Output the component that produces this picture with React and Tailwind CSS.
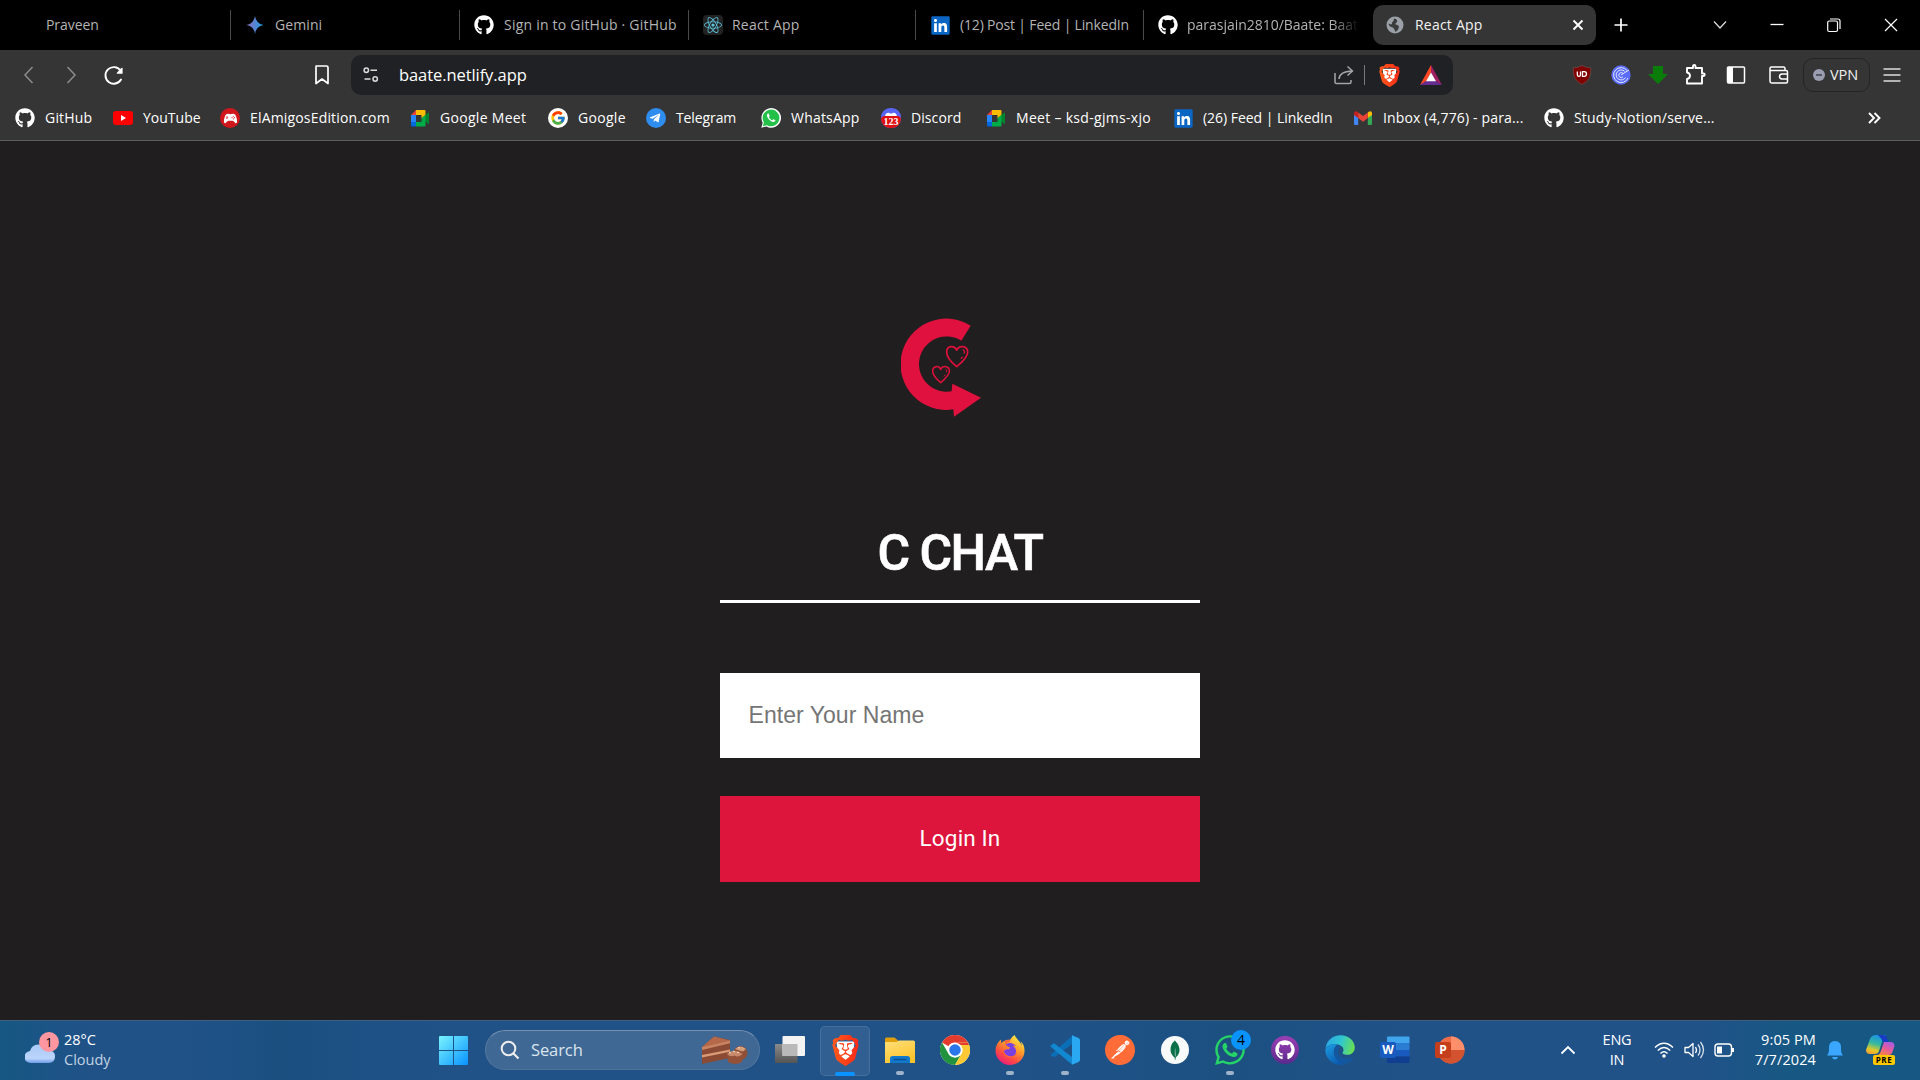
import React from "react";
import { FaGithub, FaWhatsapp, FaTelegramPlane, FaLinkedin, FaReact } from "react-icons/fa";
import { FcGoogle } from "react-icons/fc";
import { SiBrave, SiPostman, SiMongodb, SiFirefoxbrowser } from "react-icons/si";
import { IoLogoGameControllerB } from "react-icons/io";

const UI = "font-['Open_Sans','Noto_Sans',sans-serif]";

function Svg({ w = 20, h = 20, box, children, className = "" }) {
  return (
    <svg width={w} height={h} viewBox={box || `0 0 ${w} ${h}`} fill="none" className={"block shrink-0 " + className}>
      {children}
    </svg>
  );
}

function Gradients() {
  return (
    <svg width="0" height="0" className="absolute">
      <defs>
        <linearGradient id="fox" x1="0.8" y1="0" x2="0.2" y2="1">
          <stop offset="0" stopColor="#fff44f" />
          <stop offset="0.35" stopColor="#ffa52a" />
          <stop offset="0.7" stopColor="#ff4a41" />
          <stop offset="1" stopColor="#e31587" />
        </linearGradient>
        <linearGradient id="brave" x1="0" y1="0" x2="1" y2="0">
          <stop offset="0" stopColor="#ff5a1c" />
          <stop offset="1" stopColor="#fb2a17" />
        </linearGradient>
        <linearGradient id="gem" x1="0" y1="0" x2="1" y2="0">
          <stop offset="0" stopColor="#8a6fc0" />
          <stop offset="0.5" stopColor="#5684d1" />
          <stop offset="1" stopColor="#1ba1e3" />
        </linearGradient>
        <linearGradient id="win" x1="0" y1="0" x2="1" y2="1">
          <stop offset="0" stopColor="#7af3ff" />
          <stop offset="1" stopColor="#0893ff" />
        </linearGradient>
        <linearGradient id="edgeTop" x1="0" y1="0.4" x2="1" y2="0.6">
          <stop offset="0" stopColor="#2aa7e4" />
          <stop offset="0.5" stopColor="#30c6cf" />
          <stop offset="1" stopColor="#6be04f" />
        </linearGradient>
        <linearGradient id="edgeLow" x1="0" y1="0" x2="0.6" y2="1">
          <stop offset="0" stopColor="#1c9de2" />
          <stop offset="1" stopColor="#0c5ab0" />
        </linearGradient>
        <linearGradient id="folder" x1="0" y1="0" x2="0.5" y2="1">
          <stop offset="0" stopColor="#ffe07d" />
          <stop offset="1" stopColor="#fcc42c" />
        </linearGradient>
        <linearGradient id="cloud" x1="0" y1="0" x2="0" y2="1">
          <stop offset="0" stopColor="#a9c9f7" />
          <stop offset="0.75" stopColor="#bcd5fb" />
          <stop offset="1" stopColor="#6f9be8" />
        </linearGradient>
        <linearGradient id="copA" x1="0.6" y1="0" x2="0.3" y2="1">
          <stop offset="0" stopColor="#1a8fe6" />
          <stop offset="0.45" stopColor="#33b8a0" />
          <stop offset="0.8" stopColor="#e5c928" />
          <stop offset="1" stopColor="#f0a030" />
        </linearGradient>
        <linearGradient id="copB" x1="0.8" y1="0" x2="0.2" y2="1">
          <stop offset="0" stopColor="#a55be8" />
          <stop offset="0.5" stopColor="#e55c9a" />
          <stop offset="1" stopColor="#f9863d" />
        </linearGradient>
        <linearGradient id="purp" x1="0" y1="0" x2="0" y2="1">
          <stop offset="0" stopColor="#9b3fb5" />
          <stop offset="1" stopColor="#5b2a8c" />
        </linearGradient>
        <linearGradient id="tv" x1="0" y1="0" x2="0" y2="1">
          <stop offset="0" stopColor="#8a8a8a" />
          <stop offset="1" stopColor="#555555" />
        </linearGradient>
      </defs>
    </svg>
  );
}

/* ---------- brand icons ---------- */

function MeetIcon() {
  return (
    <Svg w={20} h={20}>
      <path d="M1 7L6 2v5z" fill="#ea4335" />
      <path d="M6 2h8.500Q15.500 2 15.500 3v5l-4 2.500V7H6z" fill="#fbbc04" />
      <path d="M1 7h5v7H1z" fill="#2684fc" />
      <path d="M1 14h5v4.500H2.200Q1 18.500 1 17.300z" fill="#0066da" />
      <path d="M6 14h5.500v-3.500l4 2.500v4.500q0 1-1 1H6z" fill="#00ac47" />
      <path d="M11.500 10.300L18 4.800q1-.6 1 .5v10q0 1.100-1 .4z" fill="#00832d" />
      <path d="M11.500 10.300L15.500 7v7z" fill="#00ac47" />
    </Svg>
  );
}

function GmailIcon() {
  return (
    <Svg w={20} h={20}>
      <path d="M1 5.500h4.200V17H2.300Q1 17 1 15.700z" fill="#4285f4" />
      <path d="M14.800 5.500H19v10.200Q19 17 17.700 17h-2.900z" fill="#34a853" />
      <path d="M1 5q0-1.800 1.800-1.800 1 0 1.800.7l.6.500v5.700L1 7z" fill="#c5221f" />
      <path d="M19 5q0-1.800-1.800-1.800-1 0-1.800.7l-.6.500v5.700L19 7z" fill="#fbbc04" />
      <path d="M5.200 4.400L10 8l4.800-3.600v5.700L10 13.700l-4.800-3.600z" fill="#ea4335" />
    </Svg>
  );
}

function LinkedInIcon() {
  return (
    <span className="flex w-[18px] shrink-0 justify-center">
      <span className="flex size-[16px] items-center justify-center bg-white">
        <FaLinkedin size={21} className="shrink-0 text-[#0a66c2]" />
      </span>
    </span>
  );
}

function GithubIcon() {
  return <FaGithub size={20} className="shrink-0 text-white" />;
}

function ReactIcon() {
  return (
    <span className="flex size-5 shrink-0 items-center justify-center rounded-sm bg-[#222222]">
      <FaReact size={18} className="text-[#5fc6e0]" />
    </span>
  );
}

function BraveIcon({ w, h }) {
  return (
    <svg width={w} height={h} viewBox="1.500 0 21 24" preserveAspectRatio="none" className="block shrink-0">
      <path d="M5 5h14l-1 9-6 6-6-6z" fill="#fff" />
      <SiBrave size={24} fill="url(#brave)" stroke="none" />
    </svg>
  );
}

function WhatsAppBadge() {
  return (
    <Svg w={20} h={20}>
      <path d="M.3 19.800L1.700 14.700A9.800 9.800 0 1 1 5.400 18.400z" fill="#fff" />
      <path d="M1.800 18.300l1.100-3.900A8.400 8.400 0 1 1 5.800 17.200z" fill="#25c04a" />
      <path d="M7 5.500c-.8.500-1.300 1.500-.9 2.700.9 2.700 3 4.800 5.700 5.700 1.200.3 2.100-.2 2.500-1.100l-.1-.7-2-.9-1 1c-1.500-.6-2.700-1.800-3.300-3.200l.8-1-.9-2.200z" fill="#fff" />
    </Svg>
  );
}

function DiscordIcon() {
  return (
    <div className="flex size-5 shrink-0 flex-col items-center overflow-hidden rounded-[9px] bg-[#5865f2]">
      <Svg w={20} h={8}>
        <path d="M4 9c0-3 2-4.500 4-4.200l.8.700h2.400l.8-.7c2-.3 4 1.200 4 4.200z" fill="#fff" />
      </Svg>
      <div className="flex h-3 w-5 items-center justify-center rounded-[4px] bg-[#e01010] font-['Liberation_Serif',serif] text-[10px] font-bold leading-none text-white">123</div>
    </div>
  );
}

function ChromeIcon() {
  return (
    <Svg w={30} h={30} box="0 0 48 48">
      <circle cx="24" cy="24" r="24" fill="#fff" />
      <path d="M3.200 12A24 24 0 0 1 44.800 12H24a12 12 0 0 0-10.400 6z" fill="#e33b2e" />
      <path d="M3.200 12A24 24 0 0 0 24 48l10.400-18A12 12 0 0 1 13.600 30z" fill="#23923f" />
      <path d="M44.800 12A24 24 0 0 1 24 48l10.400-18A12 12 0 0 0 34.400 18L31 12z" fill="#fcc934" />
      <path d="M24 12h20.800L46 16H33z" fill="#e33b2e" />
      <circle cx="24" cy="24" r="11.800" fill="#fff" />
      <circle cx="24" cy="24" r="9.200" fill="#2b76ea" />
    </Svg>
  );
}

function FirefoxIcon() {
  return (
    <svg width="30" height="30" viewBox="0 0 24 24" className="block">
      <circle cx="12" cy="13" r="9.500" fill="#ff6a3c" />
      <circle cx="12.500" cy="11.500" r="5.600" fill="#7a3fe0" />
      <SiFirefoxbrowser size={24} fill="url(#fox)" stroke="none" />
    </svg>
  );
}

function CodeIcon() {
  return (
    <Svg w={30} h={30}>
      <path d="M1 19.500L22 1v8L4.500 22 1 20.700z" fill="#0b6fb8" />
      <path d="M.7 10.500L4 8.300 22 22v7.500L.7 11.700z" fill="#1288d1" />
      <path d="M22 .3L28.500 3q1.500.8 1.500 2.300v19.400q0 1.500-1.500 2.300L22 29.700z" fill="#2aa9f2" />
    </Svg>
  );
}

function EdgeIcon() {
  return (
    <Svg w={30} h={30}>
      <path d="M.5 13.500C1.500 5.500 7.500.2 15.500.2 24 .2 29.800 6 29.800 12.500c0 4.500-3.300 7.300-7.400 7.300-3.600 0-5.400-1.300-4.600-2.600 1.400-2 .8-4.800-1.600-6.300C10.800 7.500 3.500 8.500.5 13.500z" fill="url(#edgeTop)" />
      <path d="M.4 14.300C2.500 9.500 8.500 8 12.800 9.600c-3.600 2-5 6.500-3.400 10.700 1.700 4.400 6 7.600 10.300 9-9.900 2.500-20-4.500-19.300-15z" fill="url(#edgeLow)" />
      <path d="M12.800 10.500c-3.800 2.500-4.600 7-2.800 11.300 2 4.500 7 8 11.400 6.700 3-1 5.300-3 6.600-5.300.3-.6 0-1-.6-.7-6.400 3-14.300.3-14.600-5.700-.1-2 1-3.800 2.700-4.500z" fill="#1357a0" />
    </Svg>
  );
}

function OfficeIcon({ letter, kind }) {
  return (
    <div className="relative h-[30px] w-[30px]">
      {kind === "word" ? (
        <Svg w={30} h={30}>
          <path d="M8 1.500h20.500q1 0 1 1V8H7V2.500q0-1 1-1z" fill="#41a5ee" />
          <path d="M7 8h22.500v7H7z" fill="#2b7cd3" />
          <path d="M7 15h22.500v6.500H7z" fill="#185abd" />
          <path d="M7 21.500h22.500V27q0 1-1 1H8q-1 0-1-1z" fill="#103f91" />
        </Svg>
      ) : (
        <Svg w={30} h={30}>
          <circle cx="16" cy="15" r="13.500" fill="#ed6c47" />
          <path d="M16 1.500A13.500 13.500 0 0 1 29.500 15H16z" fill="#ff8f6b" />
          <path d="M2.500 15h27a13.500 13.500 0 0 1-27 0z" fill="#d35230" />
        </Svg>
      )}
      <div className={"absolute left-0 top-[7px] flex size-[16px] items-center justify-center rounded-[2px] font-['Open_Sans',sans-serif] text-[12px] font-bold leading-none text-white " + (kind === "word" ? "bg-[#185abd]" : "bg-[#c43e1c]")}>{letter}</div>
    </div>
  );
}

function FolderIcon() {
  return (
    <Svg w={30} h={30}>
      <path d="M0 4q0-1.500 1.500-1.500h8L13 5.500V12H0z" fill="#e0a00d" />
      <path d="M0 7h11.500l2.500-1.500h14.500Q30 5.500 30 7v21H0z" fill="url(#folder)" />
      <path d="M5 28v-4.500Q5 21 7.500 21h15q2.500 0 2.500 2.500V28z" fill="#1079cc" />
      <path d="M8.500 24.500h13" stroke="#0a4d90" strokeWidth="1.500" />
    </Svg>
  );
}

function CakeIcon() {
  return (
    <Svg w={48} h={30}>
      <path d="M1 12L13 1.500 29 5v18L1 29z" fill="#8a4a34" />
      <path d="M1 12L13 1.500 29 5.500z" fill="#b5694a" />
      <path d="M1 12l28-6.500v2.700L1 15z" fill="#c98362" />
      <path d="M1 20l28-5.500v2.300L1 22.500z" fill="#d99a78" />
      <circle cx="39.500" cy="18" r="7" fill="#8e4f39" />
      <path d="M34 14q5-5 11 0l-3 2.500-4-1z" fill="#d39a78" />
      <path d="M26 19q7-5 16 0l-1 8q-6.500 4-14 0z" fill="#94513a" />
      <path d="M26 19q7-6.500 15.500 0-4 4-8 1.500-4 2-7.500-1.500z" fill="#c98a6b" />
      <path d="M28 17.500l2 .5m2-2l2 1m2 .5l2 0m-1-5l2 .5m2-.5l1 1" stroke="#f3d9c4" />
    </Svg>
  );
}

/* ---------- browser chrome ---------- */

function Tab({ width, icon, title, tracking }) {
  return (
    <div className={"flex h-[30px] shrink-0 items-center border-r border-[#4a4a4a] " + width}>
      {icon}
      <span className={"whitespace-nowrap pb-[2px] text-[14px] text-[#b3b3b3] " + tracking}>{title}</span>
    </div>
  );
}

function TabStrip() {
  return (
    <div className="flex h-[50px] shrink-0 items-center bg-black">
      <Tab width="w-[231px] pl-[46px]" title="Praveen" tracking="tracking-[-0.05px]" />
      <Tab
        width="w-[229px] gap-[11px] pl-[15px]"
        icon={<Svg w={18} h={20}><path d="M9 1q1.200 7.800 8.500 9Q10.200 11.200 9 19 7.800 11.200.5 10 7.800 8.800 9 1z" fill="url(#gem)" /></Svg>}
        title="Gemini"
        tracking="tracking-[0.1px]"
      />
      <Tab width="w-[229px] gap-[10px] pl-[14px]" icon={<GithubIcon />} title="Sign in to GitHub · GitHub" tracking="tracking-[0.22px]" />
      <Tab width="w-[227px] gap-[9px] pl-[14px]" icon={<ReactIcon />} title="React App" tracking="tracking-[0.22px]" />
      <Tab width="w-[228px] gap-[11px] pl-[15px]" icon={<LinkedInIcon />} title="(12) Post | Feed | LinkedIn" tracking="tracking-[-0.17px]" />
      <div className="flex h-[30px] w-[229px] shrink-0 items-center gap-[9px] pl-[14px]">
        <GithubIcon />
        <span className="w-[176px] whitespace-nowrap pb-[2px] text-[14px] tracking-[-0.02px] text-[#b3b3b3] [mask-image:linear-gradient(to_right,black_145px,transparent_172px)]">parasjain2810/Baate: Baat</span>
      </div>
      <div className="flex h-10 w-[223px] shrink-0 items-center rounded-[10px] bg-[#353535] pl-[13px] pr-[10px]">
        <Svg w={18} h={18}>
          <circle cx="9" cy="9" r="8.500" fill="#9aa0a6" />
          <path d="M8 2.500Q12 3 11 6 9 7 9.500 8.500q3 0 3.500 2.500-.5 3-3.500 5-1-3-2.500-4.500Q3 11 2.500 7.500L5 8.500q1.500-.5 1-2Q8 5 8 2.500z" fill="#3a3b3d" />
        </Svg>
        <span className="ml-[11px] pb-[2px] text-[14px] tracking-[0.22px] text-[#f2f2f2]">React App</span>
        <Svg w={16} h={16} className="ml-auto"><path d="M3.500 3.500l9 9m0-9l-9 9" stroke="#fff" strokeWidth="1.900" /></Svg>
      </div>
      <div className="flex flex-1 items-center">
        <Svg w={16} h={16} className="ml-[17px]"><path d="M8 1.500v13M1.500 8h13" stroke="#fff" strokeWidth="1.700" /></Svg>
        <Svg w={16} h={16} className="ml-[83px]"><path d="M2 4.500l6 6.500 6-6.500" stroke="#ddd" strokeWidth="1.200" /></Svg>
        <Svg w={16} h={16} className="ml-[41px]"><path d="M1.500 7.500h13" stroke="#fff" strokeWidth="1.300" /></Svg>
        <Svg w={16} h={16} className="ml-[41px]">
          <rect x="1.700" y="4" width="9.800" height="10.500" rx="1.500" stroke="#fff" strokeWidth="1.200" />
          <path d="M4 2h8q2 0 2 2v8" stroke="#fff" strokeWidth="1.200" />
        </Svg>
        <Svg w={16} h={16} className="ml-[41px]"><path d="M2 2l12 12M14 2L2 14" stroke="#fff" strokeWidth="1.200" /></Svg>
      </div>
    </div>
  );
}

function NavBar() {
  return (
    <div className="flex h-[50px] shrink-0 items-center">
      <div className="flex w-[351px] items-center">
        <Svg w={20} h={20} className="ml-[19px]"><path d="M13.500 2L6 10l7.500 8" stroke="#8c8c8c" strokeWidth="1.500" /></Svg>
        <Svg w={20} h={20} className="ml-[22px]"><path d="M6.500 2L14 10l-7.500 8" stroke="#8c8c8c" strokeWidth="1.500" /></Svg>
        <Svg w={22} h={22} className="ml-[22px]">
          <path d="M17.500 6.500A8.300 8.300 0 1 0 18 15.500" stroke="#fff" strokeWidth="1.900" strokeLinecap="round" />
          <path d="M19.600 4v5.800h-5.800q-.4-1.200 1-2l3-3.200q1-1.200 1.800-.6z" fill="#fff" />
        </Svg>
        <Svg w={16} h={20} className="ml-[189px]"><path d="M2 1h10.500q1.500 0 1.500 1.500V18.500L8 14l-6 4.500V2.500Q2 1 3 1z" stroke="#fff" strokeWidth="1.700" strokeLinejoin="round" /></Svg>
      </div>
      <div className="flex h-10 w-[1102px] items-center rounded-[10px] bg-[#202124]">
        <Svg w={18} h={18} className="ml-[11px]">
          <circle cx="4.300" cy="4.300" r="2.200" stroke="#ddd" strokeWidth="1.500" />
          <path d="M8.500 4.300H15M2.500 13h6" stroke="#ddd" strokeWidth="1.500" />
          <circle cx="13.200" cy="13" r="2.200" stroke="#ddd" strokeWidth="1.500" />
        </Svg>
        <span className="ml-[19px] text-[16.5px] tracking-[-0.08px] text-white">baate.netlify.app</span>
        <Svg w={20} h={20} className="ml-auto">
          <path d="M1 8v9q0 1.500 1.500 1.500h13q1.500 0 1.500-1.500v-2" stroke="#a5a5a7" strokeWidth="1.500" />
          <path d="M5 14Q5.500 6.500 18 6M13.500 1.500L18.500 6l-5 4.500" stroke="#a5a5a7" strokeWidth="1.500" />
        </Svg>
        <div className="ml-[10px] h-5 w-px bg-[#77787a]" />
        <div className="ml-[14px]"><BraveIcon w={21} h={23} /></div>
        <Svg w={22} h={20} className="ml-[20px] mr-[11px]">
          <path d="M11 0L0 20l6.500-4L11 7.500z" fill="#ff4724" />
          <path d="M11 0l11 20-6.500-4L11 7.500z" fill="#9e1f63" />
          <path d="M0 20h22l-6.500-4h-9z" fill="#662d91" />
          <path d="M11 7.500l5 8.700H6z" fill="#fff" />
        </Svg>
      </div>
      <div className="flex flex-1 items-center">
        <div className="ml-[119px] flex w-[20px] justify-center">
          <Svg w={20} h={20}>
            <path d="M10 .5q4 2.500 8.700 2.300Q20 15 10 19.500 0 15 1.300 2.800 6 3 10 .5z" fill="#800000" stroke="#7a5555" strokeWidth=".6" />
            <path d="M5.300 6.500v3.200q0 1.600 1.600 1.600t1.600-1.600V6.500m2 .2h1.800q2.200.2 2.200 2.300t-2.200 2.300h-1.800z" stroke="#fff" strokeWidth="1.300" />
          </Svg>
        </div>
        <Svg w={20} h={20} className="ml-[19px]">
          <circle cx="10" cy="10" r="9.700" fill="#5a6cf5" />
          <path d="M16 5.500A7.500 7.500 0 1 0 17 13M13.700 6.400A5 5 0 1 0 14.500 12.500M12 8.300a2.500 2.500 0 1 0 0 3.600M10 10l8-5" stroke="#e4e8ff" strokeWidth="1" />
        </Svg>
        <Svg w={20} h={20} className="ml-[17px]"><path d="M5 1h10v8h5l-10 10L0 9h5z" fill="#0a7c0a" /></Svg>
        <Svg w={22} h={22} className="ml-[17px]"><path d="M2 4h6V2.200q0-1.200 1.200-1.200T10.500 2.200V4H17v5.500h1.500q1.200 0 1.200 1.200t-1.200 1.300H17V19.500H2V15q3-.5 3-3.200T2 8.500z" stroke="#fff" strokeWidth="1.900" strokeLinejoin="round" /></Svg>
        <Svg w={20} h={20} className="ml-[19px]"><rect x="1.500" y="2" width="17" height="16" rx="1" stroke="#fff" strokeWidth="1.500" /><path d="M1 2h6v16H1z" fill="#fff" /></Svg>
        <Svg w={22} h={20} className="ml-[22px]">
          <path d="M17 5V3.500Q17 2 15.500 2H3.500Q2 2 2 3.500v12.800Q2 18 3.700 18H18q1.500 0 1.500-1.500V7Q19.500 5.500 18 5.500H2.500" stroke="#fff" strokeWidth="1.500" />
          <path d="M19.500 9H14q-2.500.3-2.500 2.500T14 14h5.500" stroke="#fff" strokeWidth="1.500" />
        </Svg>
        <div className="ml-[13px] flex h-[34px] w-[67px] items-center rounded-[10px] border border-[#242424] pl-[9px]">
          <Svg w={12} h={12}><circle cx="6" cy="6" r="6" fill="#9a9cb0" /><path d="M3 6h6" stroke="#3a3a44" strokeWidth="1.400" /></Svg>
          <span className="ml-[5px] text-[14.5px] tracking-[-0.1px] text-[#efefef]">VPN</span>
        </div>
        <Svg w={18} h={16} className="ml-[13px]"><path d="M0.500 2h17M.5 8h17M.5 14h17" stroke="#ddd" strokeWidth="1.500" /></Svg>
      </div>
    </div>
  );
}

const bookmarks = [
  { w: "w-[98px]", icon: <GithubIcon />, t: "GitHub", s: "tracking-[0.2px]" },
  {
    w: "w-[107px]",
    icon: (
      <span className="flex size-5 shrink-0 items-center justify-center"><Svg w={20} h={14}><rect width="20" height="14" rx="3" fill="#f00" /><path d="M8 4l5 3-5 3z" fill="#fff" /></Svg></span>
    ),
    t: "YouTube",
    s: "tracking-[0px]",
  },
  {
    w: "w-[190px]",
    icon: (
      <span className="flex size-5 shrink-0 items-center justify-center rounded-full bg-[#d0181c]"><IoLogoGameControllerB size={15} className="text-white" /></span>
    ),
    t: "ElAmigosEdition.com",
    s: "tracking-[0.17px]",
  },
  { w: "w-[138px]", icon: <MeetIcon />, t: "Google Meet", s: "tracking-[0.3px]" },
  {
    w: "w-[98px]",
    icon: (
      <span className="flex size-5 shrink-0 items-center justify-center rounded-full bg-white"><FcGoogle size={16} /></span>
    ),
    t: "Google",
    s: "tracking-[0.3px]",
  },
  {
    w: "w-[115px]",
    icon: (
      <span className="flex size-5 shrink-0 items-center justify-center rounded-full bg-[#2f8def] pr-[2px]"><FaTelegramPlane size={12} className="text-white" /></span>
    ),
    t: "Telegram",
    s: "tracking-[-0.1px]",
  },
  { w: "w-[120px]", icon: <WhatsAppBadge />, t: "WhatsApp", s: "tracking-[0.2px]" },
  { w: "w-[105px]", icon: <DiscordIcon />, t: "Discord", s: "tracking-[0.08px]" },
  { w: "w-[187px]", icon: <MeetIcon />, t: "Meet – ksd-gjms-xjo", s: "tracking-[0.3px]" },
  { w: "w-[180px]", icon: <span className="flex w-5 shrink-0 justify-center"><LinkedInIcon /></span>, t: "(26) Feed | LinkedIn", s: "tracking-[-0.03px]" },
  { w: "w-[191px]", icon: <GmailIcon />, t: "Inbox (4,776) - para...", s: "tracking-[0.15px]" },
  { w: "w-[200px]", icon: <GithubIcon />, t: "Study-Notion/serve...", s: "tracking-[0.17px]" },
];

function Bookmarks() {
  return (
    <div className="flex h-[40px] shrink-0 items-center pb-[4px] pl-[15px]">
      {bookmarks.map((b) => (
        <div key={b.t} className={"flex shrink-0 items-center gap-[10px] " + b.w}>
          {b.icon}
          <span className={"whitespace-nowrap pb-[2px] text-[14px] text-white " + b.s}>{b.t}</span>
        </div>
      ))}
      <Svg w={14} h={14} className="ml-auto mr-[39px]"><path d="M2 2l5 5-5 5m5.500-10l5 5-5 5" stroke="#fff" strokeWidth="1.900" /></Svg>
    </div>
  );
}

/* ---------- login page ---------- */

function Heart({ x, y, scale, stroke }) {
  return (
    <g transform={`translate(${x} ${y}) scale(${scale})`} stroke="#e0103c" strokeLinejoin="round" strokeLinecap="round">
      <path d="M0 10C-6 5-10 0-10-4.500C-10-11-2.500-12 0-6.500C2.500-12 11-11 11-4.500C11 0 6 5 0 10z" strokeWidth={stroke} />
      <path d="M6.500-7Q8.500-6 7.500-3.500M5.500.5L4.500 1.800" strokeWidth="1.200" />
    </g>
  );
}

function Logo() {
  return (
    <Svg w={84} h={100} box="0 0 252 300">
      <path d="M209 26A137 137 0 1 0 157 277L159 299 240 242 154 200 152 223A83 83 0 1 1 181 71z" fill="#e0113e" />
      <Heart x={167} y={119} scale={3} stroke={1.7} />
      <Heart x={119} y={173} scale={2.4} stroke={1.9} />
    </Svg>
  );
}

function LoginPage() {
  return (
    <main className="flex flex-1 flex-col items-center bg-[#201e1e]">
      <div className="mt-[176px] flex w-[480px] flex-col">
        <div className="h-[183px] pl-[181px]"><Logo /></div>
        <h1 className="h-[103px] border-b-[3px] border-white pt-[22px] text-center font-['Roboto',sans-serif] text-[50px] font-medium leading-[62px] tracking-[-1.5px] text-white [-webkit-text-stroke:0.6px_white]">C CHAT</h1>
        <input
          placeholder="Enter Your Name"
          className="mt-[70px] h-[85px] rounded-none bg-white px-[28.5px] font-['Liberation_Sans',sans-serif] text-[23px] tracking-[0.05px] text-black outline-none placeholder:text-[#757575]"
        />
        <button className="mt-[38px] h-[86px] bg-[#dd143c] font-['Roboto',sans-serif] text-[22.5px] tracking-[0.15px] text-white">Login In</button>
      </div>
    </main>
  );
}

/* ---------- taskbar ---------- */

function TaskApp({ children, running, active }) {
  return (
    <div className={"relative mr-[5px] flex size-[50px] shrink-0 items-center justify-center rounded-[5px] pb-px " + (active ? "border border-white/10 bg-white/8" : "")}>
      {children}
      {active && <div className="absolute -bottom-px left-[14px] h-1 w-5 rounded-full bg-[#0a93ff]" />}
      {running && <div className="absolute bottom-px left-[21px] h-1 w-2 rounded-full bg-[#9fb4ca]" />}
    </div>
  );
}

function Taskbar() {
  return (
    <footer className="flex h-[60px] shrink-0 items-center border-t border-[#3f617f] bg-[linear-gradient(90deg,#165783_0px,#205288_90px,#205288_180px,#1b4f80_280px,#205288_450px,#205288_1000px,#1c5081_1230px,#205288_1420px,#205288_1700px,#165883_1800px,#165883_1920px)]">
      <div className="flex w-[439px] items-center pb-[2px] pl-[25px]">
        <div className="relative mb-[5px] h-[34px] w-[30px]">
          <Svg w={30} h={34}><path d="M6 33a6 6 0 0 1-1-12Q7 14 14 14.500q6 0 8.500 5.500 7.500 0 7.500 6.500T23.500 33z" fill="url(#cloud)" /></Svg>
          <div className="absolute left-[14px] top-[2px] flex size-5 items-center justify-center rounded-full bg-[#ff96a0] text-[13px] leading-none text-black">1</div>
        </div>
        <div className="ml-[9px] text-[14.5px] leading-[20px] text-white">
          <div>28°C</div>
          <div className="text-[#c3d3e3]">Cloudy</div>
        </div>
      </div>
      <Svg w={29} h={29}>
        <path d="M0 1q0-1 1-1h13v14H0zM15 0h13q1 0 1 1v13H15zM0 15h14v14H1q-1 0-1-1zM15 15h14v13q0 1-1 1H15z" fill="url(#win)" />
      </Svg>
      <div className="mb-px ml-[17px] flex h-10 w-[275px] items-center rounded-full border border-t-[#7791b1] border-x-[#55779f] border-b-[#4c719b] bg-[#3f6994] pl-[14px]">
        <Svg w={20} h={20}><circle cx="8.500" cy="8.500" r="6.800" stroke="#eee" strokeWidth="2" /><path d="M13.500 13.500l5 5" stroke="#eee" strokeWidth="2.200" /></Svg>
        <span className="ml-[11px] text-[16.500px] tracking-[-0.1px] text-[#dbe4ee]">Search</span>
        <div className="ml-auto mr-[10px]"><CakeIcon /></div>
      </div>
      <div className="ml-[5px] flex">
        <TaskApp>
          <Svg w={30} h={28}><rect y="8" width="22.500" height="19" rx="1" fill="url(#tv)" /><rect x="7.500" width="22.500" height="20" rx="1" fill="#f3f3f3" /><path d="M7.500 8h15v12h-15z" fill="#b9b9b9" /></Svg>
        </TaskApp>
        <TaskApp active><BraveIcon w={27} h={31} /></TaskApp>
        <TaskApp running><FolderIcon /></TaskApp>
        <TaskApp><ChromeIcon /></TaskApp>
        <TaskApp running><FirefoxIcon /></TaskApp>
        <TaskApp running><CodeIcon /></TaskApp>
        <TaskApp><span className="flex size-[28px] items-center justify-center rounded-full bg-white"><SiPostman size={30} className="shrink-0 text-[#ff6c37]" /></span></TaskApp>
        <TaskApp><span className="flex size-7 items-center justify-center rounded-full bg-[#f8faf9]"><SiMongodb size={20} className="text-[#0a7048]" /></span></TaskApp>
        <TaskApp running>
          <FaWhatsapp size={34} className="shrink-0 text-[#25d366]" />
          <div className="absolute left-[26px] top-[4px] flex size-5 items-center justify-center rounded-full bg-[#0a93ff] text-[14px] leading-none text-black">4</div>
        </TaskApp>
        <TaskApp><span className="flex size-7 items-center justify-center rounded-full bg-[linear-gradient(180deg,#9b3fb5,#5b2a8c)]"><FaGithub size={20} className="text-white" /></span></TaskApp>
        <TaskApp><EdgeIcon /></TaskApp>
        <TaskApp><OfficeIcon letter="W" kind="word" /></TaskApp>
        <TaskApp><OfficeIcon letter="P" kind="slides" /></TaskApp>
      </div>
      <div className="ml-auto flex items-center pb-[2px] text-[14.500px] leading-5 text-white">
        <Svg w={16} h={16}><path d="M1.500 11.500L8 5l6.500 6.500" stroke="#fff" strokeWidth="1.800" /></Svg>
        <div className="ml-[23px] w-[36px] text-center tracking-[-0.2px]"><div>ENG</div><div>IN</div></div>
        <Svg w={20} h={18} className="ml-[19px]">
          <path d="M1 6.500q9-8.500 18 0M3.800 9.500q6.200-6 12.400 0M6.500 12.500q3.500-3.400 7 0" stroke="#fff" strokeWidth="1.500" /><circle cx="10" cy="15" r="1.800" fill="#fff" />
        </Svg>
        <Svg w={21} h={18} className="ml-[10px]">
          <path d="M1 6.500h3.500L9 2.500v13L4.500 11.500H1z" stroke="#fff" strokeWidth="1.300" strokeLinejoin="round" />
          <path d="M11.500 6q2 3 0 6" stroke="#fff" strokeWidth="1.300" /><path d="M14 3.500q4 5.500 0 11M16.500 1q6 8 0 16" stroke="#d6e0ea" strokeWidth="1.300" />
        </Svg>
        <Svg w={21} h={14} className="ml-[9px]">
          <rect x="1" y="1" width="16.500" height="12" rx="3" stroke="#fff" strokeWidth="1.400" /><path d="M3 3.500h5v7H3z" fill="#fff" /><path d="M19 5v4" stroke="#fff" strokeWidth="2" />
        </Svg>
        <div className="ml-[13px] w-[68px] text-right tracking-[0.1px]"><div>9:05 PM</div><div>7/7/2024</div></div>
        <Svg w={18} h={20} className="ml-[10px]"><path d="M1 15.500q2-2 2-5.500V7.500Q3 1 9 1t6 6.500V10q0 3.500 2 5.500z" fill="#3aa6ff" /><path d="M6 17h6q-.8 2.500-3 2.500T6 17z" fill="#3aa6ff" /></Svg>
        <div className="relative ml-[22px] mr-[25px] h-[29px] w-[29px]">
          <Svg w={29} h={29}>
            <path d="M14 0h6q-2.500 1.500-4 7l-3 9q-1 3-4 3H4q-4 0-4-4L4 4q1.500-4 6-4z" fill="url(#copA)" />
            <path d="M12 0h5q3 0 4 3l1.500 4H19q-2.500 0-3.500-3z" fill="#173bc4" />
            <path d="M18 7h7.500q3 .5 3 4l-2 6q-1 3-4 3H11.500q2 0 3-3z" fill="url(#copB)" />
          </Svg>
          <div className="absolute -bottom-px left-[7px] flex h-[10px] w-[22px] items-center justify-center rounded-[2px] bg-[#ffc800] text-[8px] font-bold leading-none tracking-[0.500px] text-black">PRE</div>
        </div>
      </div>
    </footer>
  );
}

export default function App() {
  return (
    <div className={"flex h-screen w-full flex-col overflow-hidden bg-[#201e1e] " + UI}>
      <Gradients />
      <TabStrip />
      <div className="flex h-[91px] shrink-0 flex-col border-b border-[#5d5f5d] bg-[#353535]">
        <NavBar />
        <Bookmarks />
      </div>
      <LoginPage />
      <Taskbar />
    </div>
  );
}
